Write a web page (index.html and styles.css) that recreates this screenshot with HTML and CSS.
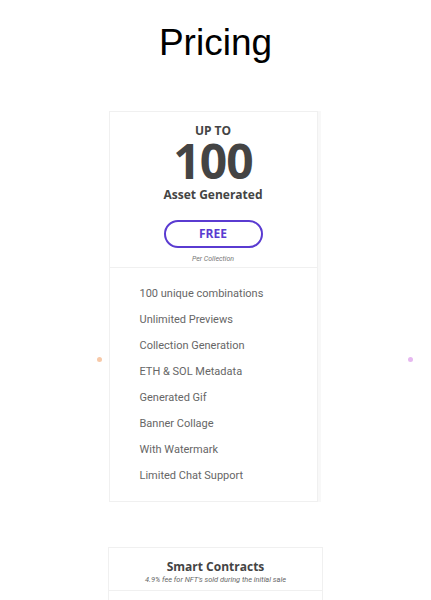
FILE: index.html
```html
<!DOCTYPE html>
<html lang="en">
<head>
  <meta charset="UTF-8">
  <title>Pricing</title>
  <link rel="stylesheet" href="styles.css">
</head>
<body>
  <div class="page">
    <h1 class="title">Pricing</h1>
    <span class="dot dot-left"></span>
    <span class="dot dot-right"></span>
    <div class="plans">
      <div class="plan">
        <div class="plan-head">
          <div class="upto">UP TO</div>
          <div class="amount">100</div>
          <div class="unit">Asset Generated</div>
          <a class="btn" href="#">FREE</a>
          <div class="per">Per Collection</div>
        </div>
        <ul class="features">
          <li>100 unique combinations</li>
          <li>Unlimited Previews</li>
          <li>Collection Generation</li>
          <li>ETH &amp; SOL Metadata</li>
          <li>Generated Gif</li>
          <li>Banner Collage</li>
          <li>With Watermark</li>
          <li>Limited Chat Support</li>
        </ul>
      </div>
    </div>
    <div class="contracts">
      <div class="contracts-head">
        <h3>Smart Contracts</h3>
        <p>4.9% fee for NFT's sold during the initial sale</p>
      </div>
      <div class="contracts-body"></div>
    </div>
  </div>
</body>
</html>
```

FILE: styles.css
```css
body {
  margin: 0; padding: 0;
  background: #ffffff;
  font-family: 'Open Sans', sans-serif;
}
.page {
  position: relative;
  width: 431px;
  padding-top: 18px;
}
.title {
  margin: 0;
  text-align: center;
  font-family: 'Liberation Sans', Arial, sans-serif;
  font-weight: normal;
  font-size: 37px;
  line-height: 50px;
  color: #000;
}
.dot {
  position: absolute;
  top: 357px;
  width: 5px; height: 5px;
  border-radius: 50%;
}
.dot-left { left: 97px; background: #f7c9a8; }
.dot-right { left: 408px; background: #e6b8f0; }
.plans {
  width: 214px;
  margin: 43px auto 0;
}
.plan {
  width: 207px;
  border: 1px solid #f0f0f0;
  box-shadow: 3px 0 0 #f8f8f8;
}
.plan-head {
  text-align: center;
  padding: 12px 0 3px;
  border-bottom: 1px solid #f0f0f0;
}
.upto {
  font-weight: 700;
  font-size: 12px;
  line-height: 14px;
  color: #444;
}
.amount {
  font-weight: 700;
  font-size: 48px;
  line-height: 46px;
  letter-spacing: -1px;
  color: #444;
}
.unit {
  margin-top: 3px;
  font-weight: 700;
  font-size: 12px;
  line-height: 16px;
  color: #444;
}
.btn {
  display: block;
  width: 95px;
  margin: 17px auto 0;
  border: 2px solid #5a3bd1;
  border-radius: 15px;
  font-weight: 700;
  font-size: 12px;
  line-height: 24px;
  color: #5a3bd1;
  text-decoration: none;
}
.per {
  margin-top: 6px;
  font-family: 'Roboto', sans-serif;
  font-style: italic;
  font-size: 7px;
  line-height: 10px;
  color: #777;
}
.features {
  list-style: none;
  margin: 0;
  padding: 13px 0 12px 30px;
}
.features li {
  font-family: 'Roboto', sans-serif;
  font-size: 11px;
  line-height: 26px;
  color: #666;
}
.contracts {
  width: 213px;
  margin: 45px auto 0;
  border: 1px solid #f0f0f0;
}
.contracts-head {
  text-align: center;
  padding: 11px 0 5px;
  border-bottom: 1px solid #f0f0f0;
}
.contracts-head h3 {
  margin: 0;
  font-size: 12px;
  line-height: 16px;
  color: #444;
}
.contracts-head p {
  margin: 0;
  font-family: 'Roboto', sans-serif;
  font-style: italic;
  font-size: 7.4px;
  line-height: 10px;
  color: #666;
}
.contracts-body {
  height: 60px;
}
```
